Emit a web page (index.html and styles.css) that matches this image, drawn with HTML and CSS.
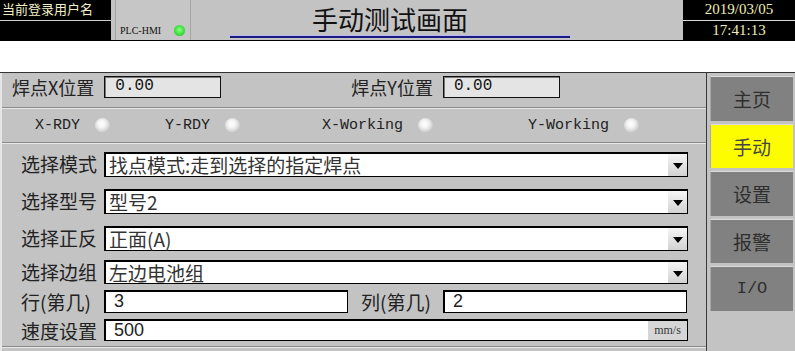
FILE: index.html
```html
<!DOCTYPE html>
<html lang="zh-CN">
<head>
<meta charset="utf-8">
<title>手动测试画面</title>
<link rel="stylesheet" href="styles.css">
</head>
<body>
<header class="topbar">
  <div class="user">
    <div class="user-name">当前登录用户名</div>
  </div>
  <div class="plc">
    <span class="plc-text">PLC-HMI</span>
    <span class="led-green"></span>
  </div>
  <div class="title-area">
    <div class="title">
      <div class="title-text">手动测试画面</div>
      <div class="title-line"></div>
    </div>
  </div>
  <div class="clock">
    <div class="clock-row clock-date">2019/03/05</div>
    <div class="clock-row">17:41:13</div>
  </div>
</header>
<div class="msgbar"></div>
<main class="main">
  <section class="panel">
    <div class="pos-row">
      <span class="label">焊点X位置</span>
      <span class="num-box">0.00</span>
      <span class="label label-y">焊点Y位置</span>
      <span class="num-box">0.00</span>
    </div>
    <div class="sep"></div>
    <div class="status-row">
      <div class="status"><span>X-RDY</span><span class="led"></span></div>
      <div class="status"><span>Y-RDY</span><span class="led"></span></div>
      <div class="status"><span>X-Working</span><span class="led"></span></div>
      <div class="status"><span>Y-Working</span><span class="led"></span></div>
    </div>
    <div class="sep"></div>
    <div class="form">
      <div class="frow h25">
        <span class="flabel">选择模式</span>
        <div class="select"><span class="sel-text">找点模式:走到选择的指定焊点</span><span class="arrow"></span></div>
      </div>
      <div class="frow h25 mt12">
        <span class="flabel">选择型号</span>
        <div class="select"><span class="sel-text">型号2</span><span class="arrow"></span></div>
      </div>
      <div class="frow h25 mt12">
        <span class="flabel">选择正反</span>
        <div class="select"><span class="sel-text">正面(A)</span><span class="arrow"></span></div>
      </div>
      <div class="frow h24 mt9">
        <span class="flabel">选择边组</span>
        <div class="select"><span class="sel-text">左边电池组</span><span class="arrow"></span></div>
      </div>
      <div class="frow h23 mt6">
        <span class="flabel">行(第几)</span>
        <div class="input half">3</div>
        <span class="flabel col-label">列(第几)</span>
        <div class="input half">2</div>
      </div>
      <div class="frow h22 mt6">
        <span class="flabel">速度设置</span>
        <div class="input wide"><span class="val">500</span><span class="unit">mm/s</span></div>
      </div>
    </div>
    <div class="sep sep-bottom"></div>
  </section>
  <nav class="nav">
    <div class="btn">主页</div>
    <div class="btn btn-active">手动</div>
    <div class="btn">设置</div>
    <div class="btn">报警</div>
    <div class="btn btn-io">I/O</div>
  </nav>
</main>
</body>
</html>
```
FILE: styles.css
```css
* { box-sizing: border-box; }
html, body { margin: 0; padding: 0; }
body {
  width: 795px;
  height: 351px;
  overflow: hidden;
  background: #c3c3c3;
  font-family: "Noto Sans CJK SC", sans-serif;
  color: #222;
}

/* top bar */
.topbar {
  display: flex;
  height: 40px;
  background: #c3c3c3;
}
.user {
  width: 111px;
  background: #000;
}
.user-name {
  height: 21px;
  border-bottom: 1px solid #cfcfcf;
  color: #f3efc6;
  font-size: 13px;
  line-height: 18px;
  padding-left: 2px;
  white-space: nowrap;
}
.plc {
  margin-left: 4px;
  width: 76px;
  border-left: 1px solid #a4a4a4;
  border-right: 1px solid #a4a4a4;
  background: #c6c6c6;
  display: flex;
  align-items: flex-end;
  padding: 0 0 4px 4px;
  gap: 13px;
}
.plc-text {
  font-family: "Liberation Serif", serif;
  font-size: 10px;
  line-height: 11px;
  color: #111;
}
.led-green {
  width: 11px;
  height: 11px;
  border-radius: 50%;
  background: radial-gradient(circle at 50% 45%, #8cff8c 0, #3ce03c 55%, #20b020 100%);
}
.title-area {
  flex: 1;
  padding-left: 39px;
}
.title {
  width: 340px;
  height: 40px;
  display: flex;
  flex-direction: column;
  justify-content: flex-end;
  padding-bottom: 2px;
}
.title-text {
  text-align: center;
  padding-right: 20px;
  font-size: 26px;
  line-height: 32px;
  color: #111;
}
.title-line {
  height: 3px;
  border-top: 1px solid #b8b8f0;
  background: #1a1a80;
}
.clock {
  width: 112px;
  background: #000;
  color: #efedb8;
  font-family: "Liberation Serif", serif;
  font-size: 15px;
  text-align: center;
}
.clock-row {
  height: 20px;
  line-height: 19px;
}
.clock-date {
  border-bottom: 1px solid #d8d8d8;
  height: 21px;
}

/* message bar */
.msgbar {
  height: 33px;
  background: #fff;
  border-top: 1px solid #000;
  border-bottom: 1px solid #333;
}

/* main */
.main {
  display: flex;
  height: 278px;
}
.panel {
  width: 707px;
  background: #c3c3c3;
  border-left: 2px solid #e6e6e6;
  border-right: 1px solid #3a3a3a;
  display: flex;
  flex-direction: column;
}
.pos-row {
  height: 34px;
  display: flex;
  align-items: flex-start;
  padding: 3px 0 0 10px;
}
.label {
  font-size: 18px;
  line-height: 22px;
  color: #222;
  margin-right: 10px;
  white-space: nowrap;
}
.label-y {
  margin-left: 130px;
}
.num-box {
  width: 117px;
  height: 22px;
  background: #e4e4e4;
  border: 1px solid #111;
  box-shadow: inset 1px 1px 0 #777;
  font-family: "Liberation Mono", monospace;
  font-size: 16px;
  line-height: 19px;
  padding-left: 10px;
  color: #111;
}
.sep {
  height: 2px;
  border-top: 1px solid #8a8a8a;
  border-bottom: 1px solid #e8e8e8;
}
.status-row {
  height: 33px;
  display: grid;
  grid-template-columns: 130px 157px 206px auto;
  align-items: center;
  padding-left: 33px;
}
.status {
  display: flex;
  align-items: center;
  gap: 15px;
  font-family: "Liberation Mono", monospace;
  font-size: 15px;
  color: #222;
}
.led {
  width: 15px;
  height: 15px;
  border-radius: 50%;
  background: radial-gradient(circle at 45% 40%, #ffffff 0, #f4f4f4 30%, #cfcfcf 65%, #8e8e8e 100%);
}

/* form */
.form {
  flex: 1;
  padding: 8px 0 0 0;
  display: flex;
  flex-direction: column;
}
.frow {
  display: flex;
  align-items: stretch;
}
.h25 { height: 25px; }
.h24 { height: 24px; }
.h23 { height: 23px; }
.h22 { height: 22px; }
.mt12 { margin-top: 12px; }
.mt9 { margin-top: 9px; }
.mt6 { margin-top: 6px; }
.flabel {
  width: 102px;
  padding-left: 19px;
  font-size: 19px;
  line-height: 24px;
  color: #222;
  white-space: nowrap;
}
.select {
  width: 584px;
  background: #fff;
  border: 1px solid #000;
  border-top-width: 2px;
  border-left-width: 2px;
  display: flex;
  align-items: stretch;
}
.sel-text {
  flex: 1;
  padding-left: 3px;
  font-size: 19px;
  line-height: 21px;
  color: #333;
  white-space: nowrap;
}
.arrow {
  width: 19px;
  background: linear-gradient(#f6f6f6, #d2d2d2);
  position: relative;
}
.arrow::after {
  content: "";
  position: absolute;
  left: 5px;
  top: 50%;
  margin-top: -2px;
  border-left: 5px solid transparent;
  border-right: 5px solid transparent;
  border-top: 6px solid #000;
}
.input {
  background: #fff;
  border: 1px solid #000;
  border-top-width: 2px;
  border-left-width: 2px;
  font-family: "Liberation Sans", sans-serif;
  font-size: 18px;
  line-height: 19px;
  padding-left: 8px;
  color: #222;
}
.half {
  width: 244px;
}
.col-label {
  width: 95px;
  padding-left: 13px;
}
.wide {
  width: 584px;
  display: flex;
  padding-left: 0;
}
.val {
  flex: 1;
  padding-left: 8px;
}
.unit {
  width: 39px;
  background: #d6d6d6;
  font-family: "Liberation Serif", serif;
  font-size: 12px;
  line-height: 19px;
  text-align: center;
  color: #333;
}
.sep-bottom {
  margin-bottom: 3px;
}

/* nav */
.nav {
  flex: 1;
  background: #c3c3c3;
  padding: 3px 2px 0 3px;
  display: flex;
  flex-direction: column;
  gap: 3px;
}
.btn {
  height: 44.5px;
  background: #818181;
  border-top: 1px solid #dcdcdc;
  border-left: 1px solid #a8a8a8;
  display: flex;
  align-items: center;
  justify-content: center;
  font-size: 19px;
  color: #2e2e2e;
}
.btn-active {
  background: #fdfd00;
  color: #444;
}
.btn-io {
  font-family: "Liberation Mono", monospace;
  font-size: 17px;
}
```
